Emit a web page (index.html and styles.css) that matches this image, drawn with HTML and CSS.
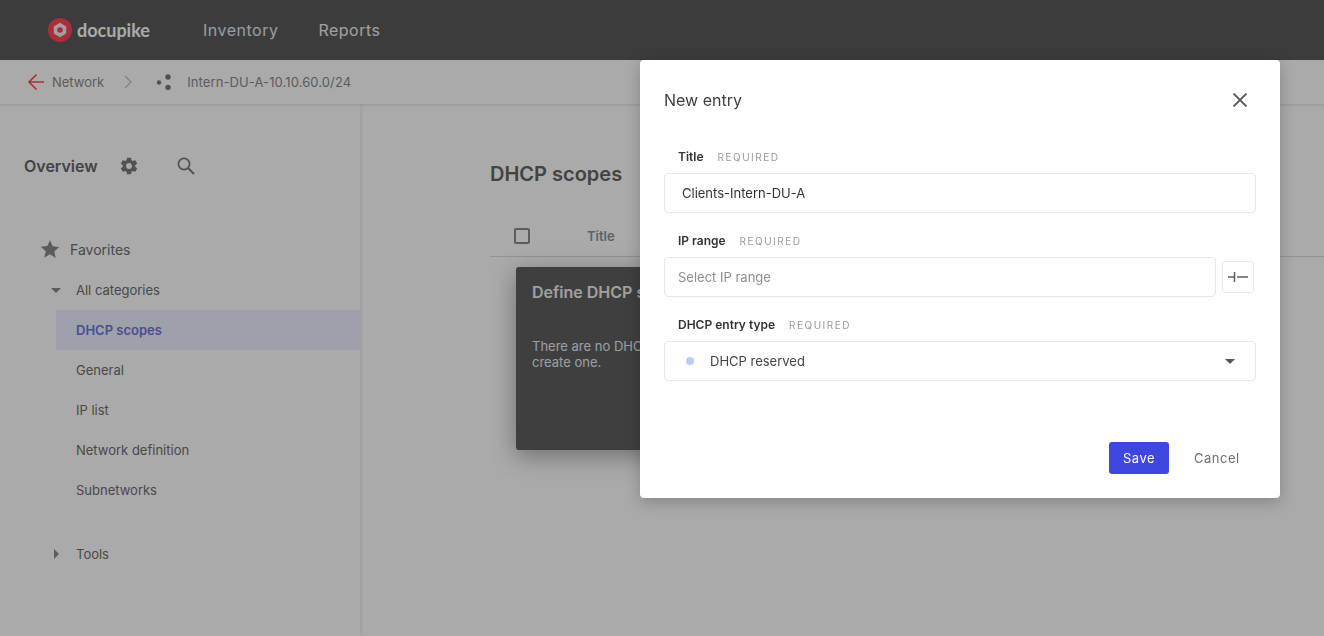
FILE: index.html
```html
<!DOCTYPE html>
<html lang="en">
<head>
<meta charset="utf-8">
<title>docupike</title>
<link rel="stylesheet" href="styles.css">
</head>
<body>
<div class="app">
  <header class="topbar">
    <div class="logo">
      <svg class="logo-mark" width="24" height="24" viewBox="0 0 24 24"><circle cx="12" cy="12" r="12" fill="#ff4458"/><path d="M12 4.800l6.200 3.600v7.200L12 19.200l-6.200-3.600V8.400z" fill="#f0f0f0"/><circle cx="12" cy="12" r="2.800" fill="#ff4458"/></svg>
      <span class="logo-text">docupike</span>
    </div>
    <nav class="topnav"><a>Inventory</a><a>Reports</a></nav>
  </header>
  <div class="crumbs">
    <svg class="crumb-back" width="18" height="18" viewBox="0 0 18 18"><path d="M17 9H2M9.500 1.500L2 9l7.500 7.500" fill="none" stroke="#ff4458" stroke-width="1.600"/></svg>
    <span class="crumb-link">Network</span>
    <svg class="crumb-sep" width="8" height="14" viewBox="0 0 8 14"><path d="M1 1l6 6-6 6" fill="none" stroke="#c4c4c4" stroke-width="1.400"/></svg>
    <svg class="crumb-icon" width="16" height="16" viewBox="0 0 16 16"><circle cx="3" cy="8.500" r="2.200" fill="#7a7a7a"/><circle cx="12" cy="3" r="2.700" fill="#7a7a7a"/><circle cx="12" cy="13.500" r="2.700" fill="#7a7a7a"/></svg>
    <span class="crumb-current">Intern-DU-A-10.10.60.0/24</span>
  </div>
  <div class="layout">
    <aside class="sidebar">
      <div class="side-head">
        <span class="side-title">Overview</span>
        <svg class="gear" width="20" height="20" viewBox="0 0 24 24"><path fill="#7c7c7c" d="M19.430 12.980c.04-.32.07-.64.07-.98s-.03-.66-.07-.98l2.110-1.650c.19-.15.24-.42.120-.64l-2-3.460c-.12-.22-.39-.3-.61-.22l-2.490 1c-.52-.4-1.080-.73-1.690-.98l-.38-2.650A.488.488 0 0 0 14 2h-4c-.25 0-.46.18-.49.420l-.38 2.650c-.61.250-1.170.590-1.690.980l-2.490-1c-.23-.09-.49 0-.61.220l-2 3.460c-.13.220-.07.490.12.640l2.110 1.650c-.04.320-.07.650-.07.980s.03.660.07.980l-2.110 1.650c-.19.150-.24.420-.12.640l2 3.460c.12.220.39.300.61.220l2.490-1c.52.400 1.080.730 1.690.980l.38 2.650c.03.240.24.420.49.420h4c.25 0 .46-.18.49-.42l.38-2.650c.61-.25 1.170-.59 1.690-.98l2.490 1c.23.090.49 0 .61-.22l2-3.460c.12-.22.07-.49-.12-.64l-2.110-1.650zM12 15.500a3.500 3.500 0 1 1 0-7 3.500 3.500 0 0 1 0 7z"/></svg>
        <svg class="search" width="20" height="20" viewBox="0 0 20 20"><circle cx="8" cy="8" r="5.600" fill="none" stroke="#7c7c7c" stroke-width="1.700"/><path d="M12 12l6 6" stroke="#7c7c7c" stroke-width="2"/></svg>
      </div>
      <div class="fav">
        <svg class="star" width="20" height="20" viewBox="0 0 24 24"><path fill="#8a8a8a" d="M12 1.500l3.200 7.300 7.900.8-6 5.300 1.800 7.800L12 18.300l-6.900 4.100 1.800-7.800-6-5.300 7.900-.8z"/></svg>
        <span>Favorites</span>
      </div>
      <div class="tree-row">
        <span class="caret-down"></span>
        <span>All categories</span>
      </div>
      <ul class="tree-list">
        <li class="tree-item active">DHCP scopes</li>
        <li class="tree-item">General</li>
        <li class="tree-item">IP list</li>
        <li class="tree-item">Network definition</li>
        <li class="tree-item">Subnetworks</li>
      </ul>
      <div class="tree-row tools">
        <span class="caret-right"></span>
        <span>Tools</span>
      </div>
    </aside>
    <main class="main">
      <h1 class="page-title">DHCP scopes</h1>
      <div class="table-head">
        <span class="checkbox"></span>
        <span class="col-title">Title</span>
      </div>
      <section class="empty-card">
        <h2>Define DHCP scopes</h2>
        <p>There are no DHCP scopes defined yet. Click here to<br>create one.</p>
      </section>
    </main>
  </div>
</div>
<div class="overlay"></div>
<div class="modal">
  <div class="modal-head">
    <span class="modal-title">New entry</span>
    <svg class="modal-close" width="16" height="16" viewBox="0 0 16 16"><path d="M1.500 1.500l13 13M14.500 1.500l-13 13" stroke="#5f5f5f" stroke-width="1.800"/></svg>
  </div>
  <div class="field">
    <div class="label"><b>Title</b><span>REQUIRED</span></div>
    <div class="input value">Clients-Intern-DU-A</div>
  </div>
  <div class="field">
    <div class="label"><b>IP range</b><span>REQUIRED</span></div>
    <div class="range-row">
      <div class="input placeholder">Select IP range</div>
      <span class="range-btn">
        <svg width="20" height="10" viewBox="0 0 20 10"><path d="M0 5h6M6.500 0v10M9 5h11" stroke="#5f5f5f" stroke-width="1.500"/></svg>
      </span>
    </div>
  </div>
  <div class="field">
    <div class="label"><b>DHCP entry type</b><span>REQUIRED</span></div>
    <div class="input select">
      <span class="dot"></span>
      <span class="select-text">DHCP reserved</span>
      <span class="select-caret"></span>
    </div>
  </div>
  <div class="actions">
    <span class="btn-save">Save</span>
    <span class="btn-cancel">Cancel</span>
  </div>
</div>
</body>
</html>
```
FILE: styles.css
```css
* { box-sizing: border-box; }
html, body { margin: 0; height: 100%; overflow: hidden; }
body { font-family: Inter, "Liberation Sans", sans-serif; background: #fff; color: #6e6e6e; }
.app { height: 636px; display: flex; flex-direction: column; overflow: hidden; }

.topbar { height: 60px; flex: none; background: #5b5b5b; display: flex; align-items: center; padding-left: 48px; }
.logo { display: flex; align-items: center; width: 155px; }
.logo-text { font-family: Lato, sans-serif; font-size: 18px; font-weight: 700; color: #ffffff; margin-left: 5px; }
.topnav { display: flex; gap: 40px; font-size: 16px; letter-spacing: .5px; }
.topnav a:first-child { color: #e0ebf3; }
.topnav a { color: #f0f0f0; }

.crumbs { height: 44px; flex: none; background: #fff; display: flex; align-items: center; padding-left: 27px; font-size: 13px; color: #8b8b8b; box-shadow: 0 1px 3px rgba(0,0,0,.12); position: relative; z-index: 2; }
.crumb-link { margin-left: 7px; }
.crumb-sep { margin-left: 20px; }
.crumb-icon { margin-left: 24px; }
.crumb-current { margin-left: 15px; letter-spacing: .1px; }

.layout { flex: 1; display: flex; min-height: 0; }
.sidebar { width: 360px; flex: none; background: #fff; box-shadow: 1px 0 4px rgba(0,0,0,.08); padding-top: 49px; position: relative; z-index: 1; }
.side-head { height: 26px; display: flex; align-items: center; padding-left: 24px; }
.side-title { font-size: 16px; font-weight: 600; color: #656565; width: 95px; }
.search { margin-left: 37px; }
.fav { display: flex; align-items: center; height: 40px; margin-top: 50px; margin-bottom: 1px; padding-left: 40px; font-size: 14px; color: #6e6e6e; }
.fav span { margin-left: 10px; }
.tree-row { height: 40px; display: flex; align-items: center; padding-left: 51px; font-size: 13px; color: #6e6e6e; }
.caret-down { width: 0; height: 0; border: 5px solid transparent; border-top: 5px solid #8a8a8a; border-bottom: 0; margin-right: 15px; }
.caret-right { width: 0; height: 0; border: 5px solid transparent; border-left: 5px solid #8a8a8a; border-right: 0; margin-left: 3px; margin-right: 17px; }
.tree-list { list-style: none; margin: 0 0 0 56px; padding: 0; }
.tree-item { height: 40px; display: flex; align-items: center; padding-left: 20px; font-size: 13px; color: #6e6e6e; }
.tree-item.active { background: #eef2ff; color: #6f74e0; font-weight: 600; width: 304px; }
.tools { margin-top: 24px; }

.main { flex: 1; padding: 57px 0 0 130px; background: #fff; }
.page-title { margin: 0; font-size: 20px; font-weight: 600; line-height: 26px; color: #656565; }
.table-head { height: 42px; margin-top: 28px; border-bottom: 1px solid #dcdcdc; display: flex; align-items: center; padding-left: 24px; }
.checkbox { width: 16px; height: 16px; border: 2px solid #8c8c8c; border-radius: 2px; }
.col-title { margin-left: 57px; font-size: 13px; font-weight: 600; color: #929292; }
.empty-card { margin: 10px 0 0 26px; width: 600px; height: 183px; background: #5f5f5f; border-radius: 3px; box-shadow: 0 6px 24px rgba(0,0,0,.35); padding: 15px 16px; color: #f0f0f0; }
.empty-card h2 { margin: 0; font-size: 16px; font-weight: 600; line-height: 20px; }
.empty-card p { margin: 36px 0 0; font-size: 13px; line-height: 16px; color: #e8eef4; }

.overlay { position: absolute; inset: 0; background: rgba(0,0,0,.333); z-index: 5; }

.modal { position: absolute; left: 640px; top: 60px; width: 640px; height: 438px; background: #fff; border-radius: 4px; box-shadow: 0 4px 16px rgba(0,0,0,.22); z-index: 6; padding: 24px; color: #3a3a3a; will-change: transform; }
.modal-head { height: 32px; display: flex; align-items: center; justify-content: space-between; padding-right: 8px; margin-bottom: 33px; }
.modal-title { font-size: 16px; color: #3f3f3f; }
.field { margin-bottom: 4px; height: 80px; }
.label { height: 16px; margin-bottom: 8px; padding-left: 14px; display: flex; align-items: center; line-height: 16px; }
.label b { font-size: 12px; font-weight: 600; color: #333; }
.label span { margin-left: 14px; font-size: 10px; letter-spacing: 1.5px; color: #999; }
.input { height: 40px; border: 1px solid #e6e6e6; border-radius: 4px; display: flex; align-items: center; font-size: 13px; }
.value { padding-left: 17px; color: #333; }
.range-row { display: flex; align-items: center; }
.placeholder { width: 552px; padding-left: 13px; color: #8e8e8e; }
.range-btn { margin-left: 6px; width: 32px; height: 32px; border: 1px solid #e9e9e9; border-radius: 3px; display: flex; align-items: center; justify-content: center; }
.select { padding-left: 21px; padding-right: 20px; color: #444; }
.dot { width: 8px; height: 8px; border-radius: 50%; background: #b9cdf4; }
.select-text { margin-left: 16px; flex: 1; }
.select-caret { width: 0; height: 0; border: 5px solid transparent; border-top: 5px solid #555; border-bottom: 0; }
.actions { display: flex; align-items: center; margin-top: 45px; padding-left: 445px; font-size: 13px; letter-spacing: .5px; }
.btn-save { width: 60px; height: 32px; background: #4047e0; color: #fff; border-radius: 3px; display: flex; align-items: center; justify-content: center; }
.btn-cancel { margin-left: 25px; color: #6e6e6e; }
```
